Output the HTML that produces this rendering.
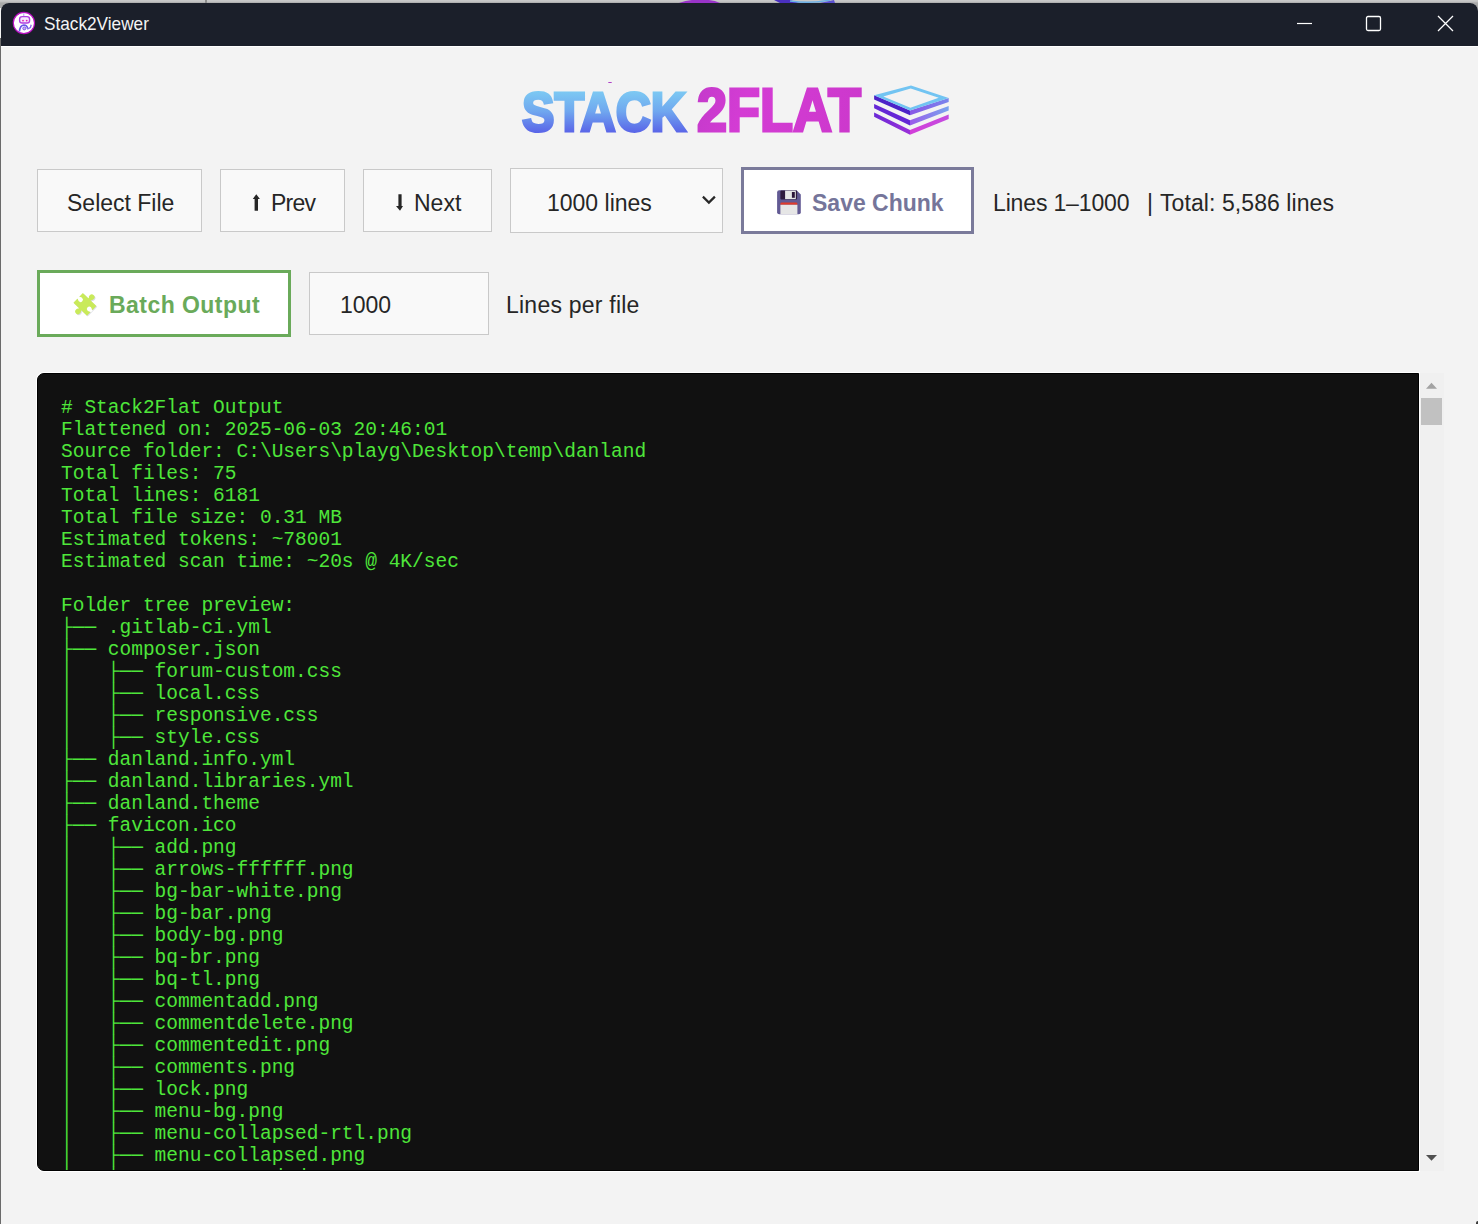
<!DOCTYPE html>
<html><head><meta charset="utf-8">
<style>
*{margin:0;padding:0;box-sizing:border-box}
html,body{width:1478px;height:1224px;overflow:hidden;background:#f3f3f3;font-family:"Liberation Sans",sans-serif}
.abs{position:absolute}
#topstrip{left:0;top:0;width:1478px;height:8px;background:linear-gradient(#cbcbcb,#c2c2c2 1.5px,#a9a9a9 3px,#a9a9a9)}
#win{left:1px;top:3px;width:1477px;height:1221px;background:#f3f3f3;border-radius:8px 8px 0 0;overflow:hidden}
#leftb{left:0;top:38px;width:1px;height:1186px;background:#6a6a6a}
#title{left:0;top:0;width:1477px;height:43px;background:#1b1f2a}
#tline{left:0;top:43px;width:1477px;height:1px;background:#fff}
.ttext{color:#f4f4f4;font-size:17px;white-space:nowrap}
.btn{position:absolute;background:#f9f9f9;border:1px solid #c9c9c9}
.lbl{position:absolute;font-size:23px;color:#262626;white-space:nowrap;line-height:1}
#term{left:37px;top:373px;width:1382px;height:798px;background:#111;border:1px solid #000;border-radius:7px 0 0 7px;box-shadow:0 0 0 1px #fff;overflow:hidden}
#term pre{position:absolute;left:23px;top:23px;font-family:"Liberation Mono",monospace;font-size:19.5px;line-height:22px;color:#4ee63a}
#sb{left:1420px;top:373px;width:24px;height:798px;background:#f0f0f0}
</style></head><body>
<div id="topstrip" class="abs"></div>
<div id="leftb" class="abs"></div>
<svg class="abs" style="left:0;top:0" width="1478" height="4">
  <rect x="205" y="0" width="2" height="3" fill="#8c8c8c"/>
  <path d="M679 3 Q690 -1 700 0 Q712 -1 720 3 Z" fill="#9a34c8"/>
  <path d="M774 0 L790 0 Q795 2 800 3 L780 3 Z" fill="#4a30c0"/>
  <path d="M790 1 Q810 4 830 0" fill="none" stroke="#6ab0e8" stroke-width="1.5"/>
  <path d="M820 3 L834 0 L835 3 Z" fill="#5a50d0"/>
</svg>
<div id="win" class="abs">
  <div id="title" class="abs"></div>
  <div id="tline" class="abs"></div>
</div>
<!-- title bar contents (page coords) -->
<svg class="abs" style="left:12px;top:11px" width="24" height="24" viewBox="0 0 24 24">
  <circle cx="11.9" cy="12" r="10.6" fill="#fff" stroke="#b810c0" stroke-width="1.15"/>
  <line x1="11.8" y1="2.3" x2="11.8" y2="5" stroke="#9a9ae8" stroke-width="0.9"/>
  <rect x="7.6" y="5.6" width="10" height="6.4" rx="2.6" fill="#f4e8fc" stroke="#b040e0" stroke-width="1.4"/>
  <circle cx="11" cy="9.6" r="0.9" fill="#e020b0"/><circle cx="14.7" cy="9.6" r="0.9" fill="#e020b0"/>
  <path d="M7.5 20.5 Q7.8 14.5 11.8 14 Q15 14 15.6 17.5" fill="none" stroke="#6a56e8" stroke-width="1.6"/>
  <circle cx="12.3" cy="17.4" r="1.5" fill="#c9b0f4" stroke="#7a50e8" stroke-width="0.9"/>
  <path d="M15.2 18.2 L18.4 16.6 L19.2 13.8" fill="none" stroke="#8a6ae8" stroke-width="1.4"/>
</svg>
<div class="abs ttext" style="left:44px;top:13px;font-size:18.5px;transform:scaleX(0.93);transform-origin:0 0">Stack2Viewer</div>
<svg class="abs" style="left:1291px;top:10px" width="180" height="30">
  <line x1="6" y1="13.5" x2="21" y2="13.5" stroke="#fff" stroke-width="1.2"/>
  <rect x="75.5" y="6.5" width="14" height="14" rx="1.5" fill="none" stroke="#fff" stroke-width="1.3"/>
  <path d="M147 6 L162 21 M162 6 L147 21" stroke="#fff" stroke-width="1.3"/>
</svg>

<!-- logo -->
<svg class="abs" style="left:500px;top:70px" width="480" height="80" viewBox="0 0 480 80">
  <defs>
    <linearGradient id="gs" gradientUnits="userSpaceOnUse" x1="0" y1="20" x2="0" y2="62">
      <stop offset="0" stop-color="#7dcbf3"/><stop offset="0.5" stop-color="#70a8ef"/><stop offset="1" stop-color="#5a66e8"/>
    </linearGradient>
    <linearGradient id="gf" gradientUnits="userSpaceOnUse" x1="197" y1="17" x2="360" y2="62">
      <stop offset="0" stop-color="#c43acb"/><stop offset="0.3" stop-color="#d43cd4"/><stop offset="1" stop-color="#cc38cc"/>
    </linearGradient>
  </defs>
  <text x="22" y="60.6" font-family="Liberation Sans" font-weight="bold" font-size="54.8" fill="url(#gs)" stroke="url(#gs)" stroke-width="3" stroke-linejoin="miter" textLength="164" lengthAdjust="spacingAndGlyphs">STACK</text>
  <text x="197" y="61.2" font-family="Liberation Sans" font-weight="bold" font-size="62" fill="url(#gf)" stroke="url(#gf)" stroke-width="3" stroke-linejoin="miter" textLength="164" lengthAdjust="spacingAndGlyphs">2FLAT</text>
</svg>

<svg class="abs" style="left:865px;top:80px" width="90" height="60" viewBox="0 0 90 60">
  <defs>
    <linearGradient id="r1" gradientUnits="userSpaceOnUse" x1="45" y1="0" x2="84" y2="0"><stop offset="0" stop-color="#8856e6"/><stop offset="1" stop-color="#7a86ec"/></linearGradient>
    <linearGradient id="r2" gradientUnits="userSpaceOnUse" x1="45" y1="0" x2="84" y2="0"><stop offset="0" stop-color="#9a5aea"/><stop offset="1" stop-color="#78a6ee"/></linearGradient>
    <linearGradient id="r3" gradientUnits="userSpaceOnUse" x1="45" y1="0" x2="84" y2="0"><stop offset="0" stop-color="#d23ed8"/><stop offset="1" stop-color="#c44ce0"/></linearGradient>
    <linearGradient id="l3" gradientUnits="userSpaceOnUse" x1="9" y1="0" x2="45" y2="0"><stop offset="0" stop-color="#6a28d6"/><stop offset="1" stop-color="#9a30d8"/></linearGradient>
  </defs>
  <polygon points="9.1,15.2 45,30.4 45,35.3 9.1,19.5" fill="#4c22c8"/>
  <polygon points="45,30.4 83.7,18 83.7,22 45,35.3" fill="url(#r1)"/>
  <polygon points="9.1,24 45,40.2 45,45.4 9.1,28.3" fill="#6426d6"/>
  <polygon points="45,40.2 83.7,26 83.7,30.4 45,45.4" fill="url(#r2)"/>
  <polygon points="9.1,32.6 45,50 45,54.8 9.1,36.8" fill="url(#l3)"/>
  <polygon points="45,50 83.7,34.4 83.7,39 45,54.8" fill="url(#r3)"/>
  <path d="M9.1,15.2 L46,5.5 L83.7,18 L45,30.4 Z M18.3,16.4 L45.4,27.7 L73.7,17.7 L45.7,8.5 Z" fill="#72c4f2" fill-rule="evenodd"/>
</svg>

<div class="abs" style="left:608px;top:82px;width:3.5px;height:1.3px;border-radius:50%;background:#b040c8"></div>
<div class="abs" style="left:1476px;top:1221px;width:2px;height:3px;background:#3a3a3a;border-radius:2px 0 0 0"></div>

<!-- row 1 -->
<div class="btn" style="left:37px;top:169px;width:165px;height:63px"></div>
<div class="lbl" style="left:67px;top:192px">Select File</div>
<div class="btn" style="left:220px;top:169px;width:125px;height:63px"></div>
<svg class="abs" style="left:250px;top:190px" width="14" height="24"><path d="M6.3 4.2 L2.8 9 L4.6 9 L4.6 20.7 L8 20.7 L8 9 L9.9 9 Z" fill="#262626"/></svg>
<div class="lbl" style="left:271px;top:192px;letter-spacing:-0.8px">Prev</div>
<div class="btn" style="left:363px;top:169px;width:129px;height:63px"></div>
<svg class="abs" style="left:390px;top:190px" width="16" height="24"><path d="M8.4 4.2 L11.6 4.2 L11.6 16 L13 16 L10 20.7 L6 16 L8.4 16 Z" fill="#262626"/></svg>
<div class="lbl" style="left:414px;top:192px">Next</div>
<div class="btn" style="left:510px;top:168px;width:213px;height:65px"></div>
<div class="lbl" style="left:547px;top:192px">1000 lines</div>
<svg class="abs" style="left:698px;top:190px" width="22" height="20"><path d="M4.9 6.6 L10.9 12.6 L16.9 6.6" fill="none" stroke="#282828" stroke-width="2.2"/></svg>
<div class="btn" style="left:741px;top:167px;width:233px;height:67px;background:#fff;border:3px solid #7a7a9a"></div>
<svg class="abs" style="left:772px;top:186px" width="34" height="32" viewBox="0 0 34 32">
  <path d="M7.2 4.2 H24.5 L28.8 8.5 V26.3 Q28.8 28.3 26.8 28.3 H7.1 Q5.1 28.3 5.1 26.3 V6.2 Q5.1 4.2 7.2 4.2 Z" fill="#625a94"/>
  <rect x="8.4" y="4.6" width="16.7" height="9" rx="1" fill="#2e1a3e"/>
  <rect x="13.1" y="4.6" width="10.7" height="8.5" fill="#e6e6e6"/>
  <rect x="19.9" y="6" width="2.9" height="5.8" fill="#2a1438"/>
  <path d="M8.4 18.8 V17.8 Q8.4 16.5 9.7 16.5 H24.1 Q25.4 16.5 25.4 17.8 V18.8 Z" fill="#e03a2a"/>
  <rect x="8.4" y="18.8" width="17" height="9.5" fill="#e6e6e6"/>
</svg>
<div class="lbl" style="left:812px;top:192px;font-weight:bold;color:#75759a">Save Chunk</div>
<div class="lbl" style="left:993px;top:192px;letter-spacing:-0.15px">Lines 1–1000</div>
<div class="lbl" style="left:1147px;top:192px">|</div>
<div class="lbl" style="left:1160px;top:192px;letter-spacing:0.08px">Total: 5,586 lines</div>

<!-- row 2 -->
<div class="btn" style="left:37px;top:270px;width:254px;height:67px;background:#fff;border:3px solid #6aaa5a"></div>
<svg class="abs" style="left:68px;top:288px" width="35" height="35" viewBox="0 0 35 35">
  <g transform="translate(17.7,17.1) rotate(44)">
    <g fill="#dcdce8">
      <rect x="-9.4" y="-6.8" width="18.8" height="13.6"/>
      <circle cx="0" cy="-9.9" r="2.8"/><rect x="-1.6" y="-9" width="3.2" height="3"/>
      <circle cx="0" cy="9.9" r="2.8"/><rect x="-1.6" y="6" width="3.2" height="3"/>
    </g>
  </g>
  <g transform="translate(16.9,16.3) rotate(44)">
    <rect x="-9.4" y="-6.8" width="18.8" height="13.6" fill="#c9ea5a"/>
    <circle cx="0" cy="-9.9" r="2.8" fill="#c9ea5a"/><rect x="-1.6" y="-9" width="3.2" height="3" fill="#c9ea5a"/>
    <circle cx="0" cy="9.9" r="2.8" fill="#c9ea5a"/><rect x="-1.6" y="6" width="3.2" height="3" fill="#c9ea5a"/>
    <circle cx="6.4" cy="0.3" r="2.4" fill="#fff"/><rect x="7.4" y="-1.1" width="2.6" height="2.8" fill="#fff"/>
    <circle cx="-6.4" cy="-0.3" r="2.4" fill="#fff"/><rect x="-10" y="-1.7" width="2.6" height="2.8" fill="#fff"/>
  </g>
</svg>
<div class="lbl" style="left:109px;top:294px;font-weight:bold;color:#6aaa5a;letter-spacing:0.45px">Batch Output</div>
<div class="btn" style="left:309px;top:272px;width:180px;height:63px"></div>
<div class="lbl" style="left:340px;top:294px">1000</div>
<div class="lbl" style="left:506px;top:294px;letter-spacing:0.23px">Lines per file</div>

<div id="term" class="abs"><pre># Stack2Flat Output
Flattened on: 2025-06-03 20:46:01
Source folder: C:\Users\playg\Desktop\temp\danland
Total files: 75
Total lines: 6181
Total file size: 0.31 MB
Estimated tokens: ~78001
Estimated scan time: ~20s @ 4K/sec

Folder tree preview:
├── .gitlab-ci.yml
├── composer.json
│   ├── forum-custom.css
│   ├── local.css
│   ├── responsive.css
│   ├── style.css
├── danland.info.yml
├── danland.libraries.yml
├── danland.theme
├── favicon.ico
│   ├── add.png
│   ├── arrows-ffffff.png
│   ├── bg-bar-white.png
│   ├── bg-bar.png
│   ├── body-bg.png
│   ├── bq-br.png
│   ├── bq-tl.png
│   ├── commentadd.png
│   ├── commentdelete.png
│   ├── commentedit.png
│   ├── comments.png
│   ├── lock.png
│   ├── menu-bg.png
│   ├── menu-collapsed-rtl.png
│   ├── menu-collapsed.png
│   ├── menu-expanded.png
</pre></div>
<div id="sb" class="abs"></div>
<svg class="abs" style="left:1420px;top:373px" width="24" height="798">
  <polygon points="11.5,9.8 17,15.8 6,15.8" fill="#a3a3a3"/>
  <rect x="1" y="25" width="21" height="27" fill="#c1c1c1"/>
  <polygon points="6,782 17,782 11.5,787.8" fill="#505050"/>
</svg>
</body></html>
